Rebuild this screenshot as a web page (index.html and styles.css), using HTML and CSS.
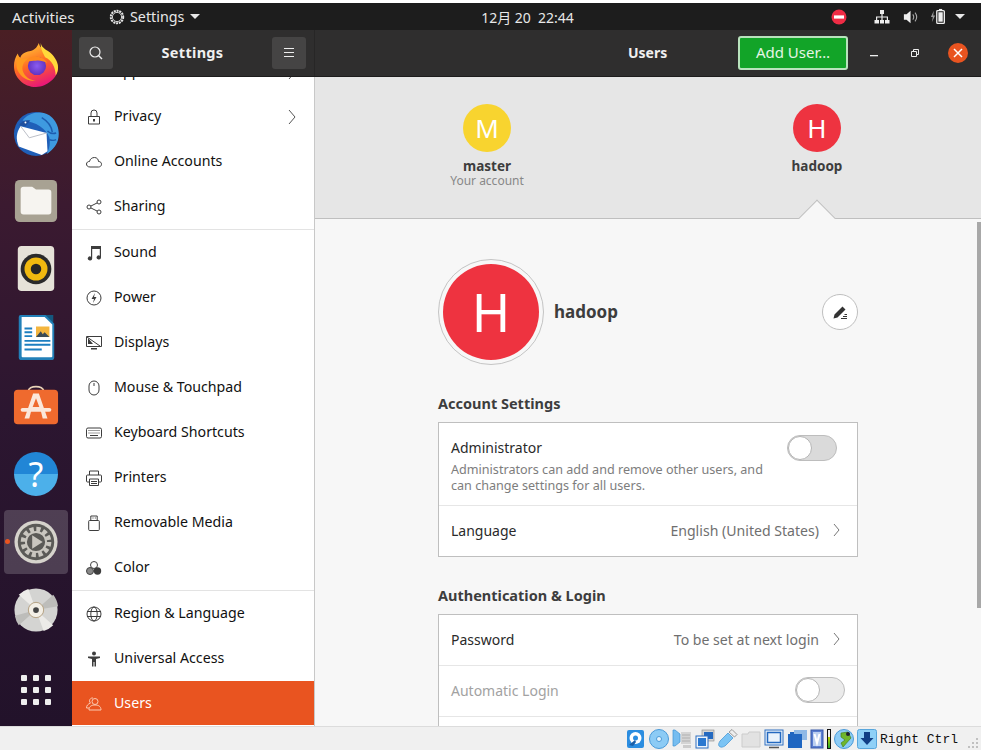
FILE: index.html
```html
<!DOCTYPE html>
<html lang="en">
<head>
<meta charset="utf-8">
<title>Settings - Users</title>
<link rel="stylesheet" href="styles.css">
</head>
<body>
<div class="screen">
  <header class="topbar">
    <div class="topbar-left">
      <span class="activities">Activities</span>
      <span class="appmenu">
        <svg class="appmenu-icon" viewBox="0 0 16 16"><circle cx="8" cy="8" r="6.2" fill="none" stroke="#e6e6e6" stroke-width="2" stroke-dasharray="2 0.8"/><circle cx="8" cy="8" r="4.6" fill="none" stroke="#e6e6e6" stroke-width="0.9"/></svg>
        Settings
        <i class="caret"></i>
      </span>
    </div>
    <div class="clock">12月 20&nbsp; 22:44</div>
    <div class="topbar-right">
      <svg class="stop" viewBox="0 0 16 16"><circle cx="8" cy="8" r="7.5" fill="#ee2c45"/><rect x="3" y="6.4" width="10" height="3.2" fill="#fff"/></svg>
      <svg class="tray net" viewBox="0 0 16 16"><path fill="#eee" d="M6 1h4v4H8.600v2.400H14V11h1.500v3.500h-4.500V11h1.800V8.600H8.600V11h1.400v3.500H6V11h1.400V8.600H3.200V11H5v3.500H.5V11H2V7.400h5.400V5H6z"/></svg>
      <svg class="tray vol" viewBox="0 0 18 16"><path fill="#eee" d="M1 5h3l4.500-4v14L4 11H1z"/><path fill="none" stroke="#aaa" stroke-width="1.200" d="M11 5c1.300 1.800 1.300 4.200 0 6M13.500 3c2.300 3 2.300 7 0 10"/></svg>
      <svg class="tray bat" viewBox="0 0 16 18"><path fill="#999" d="M3.500 3 .5 9.500h2L1.500 15l3.500-7H3z"/><rect x="6.700" y="2.700" width="8" height="13.600" rx="1" fill="none" stroke="#eee" stroke-width="1.400"/><rect x="9" y="1" width="3.400" height="2" fill="#eee"/><rect x="8.400" y="4.500" width="4.600" height="10" fill="#eee"/></svg>
      <i class="caret tray-caret"></i>
    </div>
  </header>

  <div class="desktop">
    <nav class="dock">
      <div class="dock-top">
        <div class="dock-item">
          <svg viewBox="0 0 48 48" class="dock-icon">
            <defs>
              <linearGradient id="ff" x1="0.2" y1="0" x2="0.6" y2="1"><stop offset="0" stop-color="#ffd23a"/><stop offset="0.5" stop-color="#ff6a22"/><stop offset="1" stop-color="#e8137c"/></linearGradient>
              <radialGradient id="ffc" cx="0.5" cy="0.5" r="0.6"><stop offset="0" stop-color="#8a5cf0"/><stop offset="1" stop-color="#5b2bb8"/></radialGradient>
            </defs>
            <path fill="url(#ff)" d="M24 47C11 47 1 37 1 25c0-5 1.500-9.500 4-13 .5 2.500 1.500 3.500 2.500 4.500 1-3.500 4-5.500 8-6.500 4-1 8-1 11.500-9 .5 4 3.500 6 7 8.500 6 4 13 10 13 18C47 36.500 36 47 24 47z"/>
            <path fill="#ffd93a" d="M29 1c.5 4 4 6 7.500 8.500 6 4 10.500 11 10.500 17 0 3-1 6-2.500 8.500 0-8-4-16-11-19-1.500-4-5-8-4.500-15z"/>
            <path fill="#ff9a1f" d="M5 13c1 5 6 5 12 4-6 3-9 9-6 15 2 4 6 8 13 8-9 2-18-5-20-13-1-5 0-10 1-14z"/>
            <circle cx="25" cy="25" r="9.500" fill="url(#ffc)"/>
            <path fill="#ff8a1f" d="M13 20c3-4 8-6 13-5 4 1 8 3 10 7-4-2-8-3-12-2.500-4 0-7 1-11 .5z"/>
          </svg>
        </div>
        <div class="dock-item">
          <svg viewBox="0 0 48 48" class="dock-icon">
            <circle cx="24" cy="25" r="23" fill="#1f5fb8"/>
            <path fill="#3e9ae0" d="M10 11C16 2 32-1 41 8c6 6 8 15 6 23-2 7-7 12-12 15 3-5 4-11 3-17C35 20 24 12 10 11z"/>
            <path fill="none" stroke="#1d5cae" stroke-width="1.500" d="M30 8c5 3 10 8 11 15M36 22c3 3 6 3 9 2M38 31c3 1 5 1 7 0"/>
            <path fill="#fff" d="M8 17l27 7 1 19-6 4-24-9C3 31 3 24 8 17z"/>
            <path fill="none" stroke="#b9bcc4" stroke-width="1" d="M8 17l9 12 18-5"/>
            <path fill="#1e4f9e" d="M6 16c3-4 7-6 12-5l-5 6z"/>
            <circle cx="13" cy="13" r="1" fill="#fff"/>
          </svg>
        </div>
        <div class="dock-item">
          <svg viewBox="0 0 48 48" class="dock-icon">
            <rect x="2" y="2" width="44" height="44" rx="5" fill="#a8a293"/>
            <path fill="#f6f4f0" d="M8 12a3 3 0 0 1 3-3h9l4 3h13a3 3 0 0 1 3 3v20a3 3 0 0 1-3 3H11a3 3 0 0 1-3-3z"/>
          </svg>
        </div>
        <div class="dock-item">
          <svg viewBox="0 0 48 48" class="dock-icon">
            <rect x="5" y="0" width="38" height="47" rx="4" fill="#e6e2d8"/>
            <circle cx="24" cy="24" r="16" fill="#2a2a2a"/>
            <circle cx="24" cy="24" r="12" fill="#f0b90f"/>
            <circle cx="24" cy="24" r="5.500" fill="#262626"/>
          </svg>
        </div>
        <div class="dock-item">
          <svg viewBox="0 0 48 48" class="dock-icon">
            <path fill="#14587f" d="M30 0h12v12z"/>
            <path fill="#2280b8" d="M8 0h26l9 9v35a3 3 0 0 1-3 3H9a3 3 0 0 1-3-3V2a2 2 0 0 1 2-2z"/>
            <path fill="#fff" d="M9 2h24l8 8v33a1 1 0 0 1-1 1H10a1 1 0 0 1-1-1z"/>
            <path fill="#1d7fc0" d="M12 13h8v2h-8zm0 4h8v2h-8zm0 4h8v2h-8zm0 5h27v2H12zm0 4h27v2H12zm0 5h18v2H12z"/>
            <rect x="24" y="12" width="14" height="11" fill="#f4b63f"/>
            <path fill="#3b4a55" d="M24 23l5-6 2 3 2-2 5 5z"/>
          </svg>
        </div>
        <div class="dock-item">
          <svg viewBox="0 0 48 48" class="dock-icon">
            <path fill="none" stroke="#e8d3b8" stroke-width="2" d="M16 9c0-7 16-7 16 0"/>
            <rect x="1" y="7" width="46" height="36" rx="4" fill="#ef6a2e"/>
            <path fill="#fbe7da" d="M21 11h6l9 26h-5l-2-8H19l-2 8h-5zm3 5-3.500 9h7z"/>
            <rect x="8" y="26" width="32" height="4" rx="2" fill="#fbe7da"/>
          </svg>
        </div>
        <div class="dock-item">
          <div class="help-disc">?</div>
        </div>
        <div class="dock-item active">
          <i class="run-dot"></i>
          <svg viewBox="0 0 48 48" class="dock-icon">
            <circle cx="24" cy="24" r="22.500" fill="#d6d3cc"/>
            <circle cx="24" cy="24" r="19" fill="#5b5a57"/>
            <circle cx="24" cy="24" r="13" fill="none" stroke="#c9c6bf" stroke-width="6" stroke-dasharray="4.200 2.600"/>
            <circle cx="24" cy="24" r="10.500" fill="none" stroke="#c9c6bf" stroke-width="2"/>
            <path fill="#c9c6bf" d="M20 17l11 7-11 7z"/>
          </svg>
        </div>
        <div class="dock-item">
          <svg viewBox="0 0 48 48" class="dock-icon">
            <circle cx="24" cy="24" r="22.500" fill="#d4d4d2"/>
            <path fill="#ecebe8" d="M24 24 6 8a24 24 0 0 1 10-6zM24 24l18 16a24 24 0 0 1-10 6z"/>
            <path fill="#bdbdba" d="M24 24 42 8a24 24 0 0 1 5 12zM24 24 2 30a24 24 0 0 0 4 10z"/>
            <circle cx="24" cy="24" r="8" fill="#f3efe6" stroke="#b39f80" stroke-width="1"/>
            <circle cx="24" cy="24" r="3" fill="#444"/>
          </svg>
        </div>
      </div>
      <div class="apps-grid">
        <i></i><i></i><i></i><i></i><i></i><i></i><i></i><i></i><i></i>
      </div>
    </nav>

    <div class="window">
      <div class="titlebar">
        <div class="title-left">
          <button class="hb-btn"><svg viewBox="0 0 16 16" class="hb-ico"><circle cx="7" cy="7" r="5" fill="none" stroke="#eee" stroke-width="1.200"/><path stroke="#eee" stroke-width="1.400" d="M10.500 10.500 14 14"/></svg></button>
          <span class="title-text settings-title">Settings</span>
          <button class="hb-btn"><svg viewBox="0 0 16 16" class="hb-ico"><path stroke="#eee" stroke-width="1" d="M3 3.500h10M3 7.500h10M3 11.500h10"/></svg></button>
        </div>
        <div class="title-right">
          <span class="title-text users-title">Users</span>
          <button class="add-user">Add User…</button>
          <div class="win-controls">
            <svg viewBox="0 0 12 12" class="wc"><rect x="0" y="8" width="8" height="1.300" fill="#eee"/></svg>
            <svg viewBox="0 0 12 12" class="wc"><path fill="none" stroke="#eee" stroke-width="1" d="M2.500 4.500h5.000v5h-5zM4.500 4.500V2.500h5v5h-2"/></svg>
            <span class="close"><svg viewBox="0 0 10 10"><path stroke="#fff" stroke-width="1.500" d="M1 1l8 8M9 1 1 9"/></svg></span>
          </div>
        </div>
      </div>

      <div class="panes">
        <aside class="sidebar">
          <div class="side-row clipped"><span class="side-label">Applications</span><svg viewBox="0 0 10 16" class="chev"><path fill="none" stroke="#555" d="M2 1l6 7-6 7"/></svg></div>
          <div class="side-row">
            <svg viewBox="0 0 16 16" class="side-ico"><path fill="none" stroke="#3d3d3d" d="M2.500 7.500h11v7.500h-11zM5 7.500V4a3 3 0 0 1 6 0v3.500"/><rect x="7" y="10" width="2" height="2.500" fill="#3d3d3d"/></svg>
            <span class="side-label">Privacy</span>
            <svg viewBox="0 0 10 16" class="chev"><path fill="none" stroke="#555" d="M2 1l6 7-6 7"/></svg>
          </div>
          <div class="side-row">
            <svg viewBox="0 0 16 16" class="side-ico"><path fill="none" stroke="#3d3d3d" d="M4 13C1.500 13 .5 11.500.5 10S2 7.300 3.500 7.500C4 5 6 3.500 8.500 3.500c2.500 0 4 2 4 4 2 0 3 1.200 3 2.800S14 13 12.500 13z"/></svg>
            <span class="side-label">Online Accounts</span>
          </div>
          <div class="side-row side-last">
            <svg viewBox="0 0 16 16" class="side-ico"><g fill="none" stroke="#3d3d3d"><circle cx="3" cy="8" r="2"/><circle cx="13" cy="3" r="2"/><circle cx="13" cy="13" r="2"/><path d="M4.800 7.100 11.200 3.900M4.800 8.900l6.400 3.200"/></g></svg>
            <span class="side-label">Sharing</span>
          </div>
          <div class="side-row">
            <svg viewBox="0 0 16 16" class="side-ico"><path fill="#3d3d3d" d="M5 1h10v11.500a2.200 2 0 1 1-1.200-1.800V4H6.200v9.500a2.200 2 0 1 1-1.200-1.800z"/></svg>
            <span class="side-label">Sound</span>
          </div>
          <div class="side-row">
            <svg viewBox="0 0 16 16" class="side-ico"><circle cx="8" cy="8" r="7" fill="none" stroke="#3d3d3d"/><path fill="#3d3d3d" d="M9 3 5.500 9H8l-1 4 3.500-6H8z"/></svg>
            <span class="side-label">Power</span>
          </div>
          <div class="side-row">
            <svg viewBox="0 0 16 16" class="side-ico"><path fill="none" stroke="#3d3d3d" d="M.5 1.500h15v10H.5z"/><path fill="#3d3d3d" d="M5 13h6v1.500H5zM2 3v6l5 0z"/><path stroke="#3d3d3d" d="M1 2l13 9"/></svg>
            <span class="side-label">Displays</span>
          </div>
          <div class="side-row">
            <svg viewBox="0 0 16 16" class="side-ico"><rect x="3" y="1" width="10" height="14" rx="5" fill="none" stroke="#3d3d3d"/><path stroke="#3d3d3d" d="M8 3v3"/></svg>
            <span class="side-label">Mouse &amp; Touchpad</span>
          </div>
          <div class="side-row">
            <svg viewBox="0 0 16 16" class="side-ico"><rect x=".5" y="3" width="15" height="10" rx="1.500" fill="none" stroke="#3d3d3d"/><path stroke="#3d3d3d" stroke-dasharray="1 1" d="M2.500 5.500h11M2.500 8h11"/><path stroke="#3d3d3d" d="M4 10.500h8"/></svg>
            <span class="side-label">Keyboard Shortcuts</span>
          </div>
          <div class="side-row">
            <svg viewBox="0 0 16 16" class="side-ico"><path fill="none" stroke="#3d3d3d" d="M3.500 5V1h9v4M3.500 12H1.500a1 1 0 0 1-1-1V6a1 1 0 0 1 1-1h13a1 1 0 0 1 1 1v5a1 1 0 0 1-1 1h-2M3.500 9h9v6.500h-9z"/><path stroke="#3d3d3d" d="M5 11.500h6M5 13.500h6"/></svg>
            <span class="side-label">Printers</span>
          </div>
          <div class="side-row">
            <svg viewBox="0 0 16 16" class="side-ico"><path fill="none" stroke="#3d3d3d" d="M3.500 5.500h9a.8.8 0 0 1 .8.800v8.200a1 1 0 0 1-1 1h-8.600a1 1 0 0 1-1-1V6.300a.8.800 0 0 1 .8-.8zM4.800 5.500V1h6.400v4.500"/><path stroke="#3d3d3d" d="M6.500 3h1M8.800 3h1"/></svg>
            <span class="side-label">Removable Media</span>
          </div>
          <div class="side-row side-last">
            <svg viewBox="0 0 16 16" class="side-ico"><circle cx="8" cy="5" r="3.500" fill="#fff" stroke="#444"/><circle cx="4" cy="11" r="3.500" fill="#888" stroke="#444"/><circle cx="11.500" cy="11" r="3.700" fill="#3d3d3d"/></svg>
            <span class="side-label">Color</span>
          </div>
          <div class="side-row">
            <svg viewBox="0 0 16 16" class="side-ico"><g fill="none" stroke="#3d3d3d"><circle cx="8" cy="8" r="7"/><ellipse cx="8" cy="8" rx="3.200" ry="7"/><path d="M1 5.500h14M1 10.500h14"/></g></svg>
            <span class="side-label">Region &amp; Language</span>
          </div>
          <div class="side-row">
            <svg viewBox="0 0 16 16" class="side-ico"><circle cx="8" cy="2.500" r="2" fill="#3d3d3d"/><path fill="#3d3d3d" d="M2 5.500h12v1.500l-4 1v7.500H8.500V11h-1v4.500H6V8L2 7z"/></svg>
            <span class="side-label">Universal Access</span>
          </div>
          <div class="side-row selected">
            <svg viewBox="0 0 16 16" class="side-ico"><g fill="none" stroke="#fbc9b0"><circle cx="9" cy="6.500" r="3"/><path d="M3 15c0-4 3-5 6-5s6 1 6 5z"/><path d="M7 3a3 3 0 0 0-3.500 2.800c0 1 .5 1.800 1 2.300C2 9 .5 10.500.5 13H3"/></g></svg>
            <span class="side-label">Users</span>
          </div>
        </aside>

        <main class="content">
          <section class="carousel">
            <div class="carousel-user">
              <div class="mini-avatar yellow">M</div>
              <div class="user-name">master</div>
              <div class="user-sub">Your account</div>
            </div>
            <div class="carousel-user">
              <div class="mini-avatar red">H</div>
              <div class="user-name">hadoop</div>
            </div>
            <i class="arrow"></i>
          </section>

          <section class="details">
            <div class="column">
              <div class="profile">
                <div class="big-ring"><div class="big-avatar">H</div></div>
                <div class="profile-name">hadoop</div>
                <button class="edit-btn"><svg viewBox="0 0 16 16"><path fill="#333" d="M1.500 14.500l1-4L10.500 2.500l3 3-8 8zM9 14h6v1H9zM11 12h4v.9h-4zM12.500 10H15v.9h-2.500z"/></svg></button>
              </div>

              <h2 class="section-title">Account Settings</h2>
              <div class="card">
                <div class="card-row admin">
                  <div class="admin-text">
                    <div class="row-label">Administrator</div>
                    <div class="row-desc">Administrators can add and remove other users, and can change settings for all users.</div>
                  </div>
                  <span class="switch"><i></i></span>
                </div>
                <div class="card-row plain">
                  <span class="row-label">Language</span>
                  <span class="row-value">English (United States)</span>
                  <svg viewBox="0 0 10 16" class="card-chev"><path fill="none" stroke="#777" d="M2 2l5 6-5 6"/></svg>
                </div>
              </div>

              <h2 class="section-title second">Authentication &amp; Login</h2>
              <div class="card">
                <div class="card-row plain">
                  <span class="row-label">Password</span>
                  <span class="row-value">To be set at next login</span>
                  <svg viewBox="0 0 10 16" class="card-chev"><path fill="none" stroke="#777" d="M2 2l5 6-5 6"/></svg>
                </div>
                <div class="card-row plain">
                  <span class="row-label muted">Automatic Login</span>
                  <span class="switch auto"><i></i></span>
                </div>
                <div class="card-row plain"></div>
              </div>
            </div>
            <div class="scrollbar"></div>
          </section>
        </main>
      </div>
    </div>
  </div>

  <footer class="statusbar">
    <svg class="vb" viewBox="0 0 20 20"><rect x="1" y="1" width="17" height="18" rx="2" fill="#2b8de0"/><circle cx="9.500" cy="9" r="6" fill="#fff"/><circle cx="9.500" cy="9" r="2.500" fill="#2b8de0"/><path fill="#1b5fa8" d="M3 16l6-5 1 2-3 4z"/></svg>
    <svg class="vb" viewBox="0 0 20 20"><circle cx="10" cy="10" r="9.500" fill="#8ccbf5" stroke="#4a9ad8"/><circle cx="10" cy="10" r="2.500" fill="#e6f4fd" stroke="#4a9ad8"/></svg>
    <svg class="vb" viewBox="0 0 20 20"><rect x="9" y="3" width="10" height="12" fill="#d4d4d4"/><path stroke="#b0b0b0" d="M10 6h8M10 9h8M10 12h8"/><rect x="11" y="16" width="8" height="3" fill="#ccc"/><path fill="#76bdf0" stroke="#3f92d2" stroke-width=".7" d="M1 1h2l5 4v8l-5 4H1z"/></svg>
    <svg class="vb" viewBox="0 0 20 20"><rect x="7" y="1" width="12" height="11" fill="#d5d5d5" stroke="#888" stroke-width=".6"/><rect x="9" y="3" width="9" height="7" fill="#2469c0"/><rect x="1" y="7" width="12" height="12" fill="#eef4fb" stroke="#2f6fc0"/><rect x="3" y="9" width="8" height="8" fill="#2b78d0"/></svg>
    <svg class="vb" viewBox="0 0 20 20"><path fill="#7cc4f4" stroke="#3f92d2" stroke-width=".7" d="M1 17c-1-2 0-3 1-5l8-8 5 5-8 8c-2 1-4 2-6 0z"/><path fill="#eee" stroke="#777" stroke-width=".7" d="M11 3l3-2.500 5 5L16.500 8z"/></svg>
    <svg class="vb" viewBox="0 0 20 20"><path fill="#e2e2e2" stroke="#ccc" d="M1 5h6l1-2h11v15H1z"/></svg>
    <svg class="vb" viewBox="0 0 20 20"><rect x="1" y="1" width="18" height="15" fill="#eaf3fb" stroke="#2f6fc0"/><rect x="3.500" y="3.500" width="13" height="10" fill="#e9f2fb" stroke="#2469c0" stroke-width="1.500"/><path stroke="#555" stroke-width="1.500" d="M5 18.500h10"/></svg>
    <svg class="vb" viewBox="0 0 20 20"><rect x="7" y="1" width="13" height="10" fill="#8fb9e6"/><rect x="1" y="5" width="14" height="14" fill="#1f66c1"/><rect x="3" y="3" width="4" height="3" fill="#1f66c1"/></svg>
    <svg class="vb narrow" viewBox="0 0 14 20"><rect x="1" y="1" width="12" height="18" fill="#5b7ed0" stroke="#3758a8"/><rect x="3" y="3" width="8" height="14" fill="#bcd0f0"/><path fill="none" stroke="#fff" stroke-width="2" d="M4.500 5 7 14l2.500-9"/></svg>
    <span class="led"><i></i></span>
    <svg class="vb" viewBox="0 0 20 20"><circle cx="10" cy="10" r="9.500" fill="#8ccbf5" stroke="#4a9ad8"/><path fill="#6fb62d" stroke="#3a7a12" stroke-width=".6" d="M7 4l7-1 3 6-8 9-2-4 4-3-4-3z"/><circle cx="14" cy="5" r="2" fill="#223"/></svg>
    <svg class="vb" viewBox="0 0 20 20"><rect x=".5" y=".5" width="19" height="19" rx="2" fill="#8fd0f7" stroke="#58a6dc"/><path fill="#123f86" d="M7 3h6v6h3.500L10 16 3.500 9H7z"/></svg>
    <span class="host-key">Right Ctrl</span>
    <span class="grip"><i></i><i></i><i></i><i></i><i></i><i></i></span>
  </footer>
</div>
</body>
</html>
```

FILE: styles.css
```css
* { box-sizing: border-box; }
html, body { margin: 0; padding: 0; }
body { font-family: "Noto Sans", "Open Sans", sans-serif; background: #fff; }
svg { display: block; flex: none; }
button { font: inherit; padding: 0; border: 0; }

.screen { width: 981px; height: 750px; padding-top: 3px; display: flex; flex-direction: column; overflow: hidden; background: #fff; }

/* top bar */
.topbar { height: 27px; flex: none; background: #1d1d1d; color: #e8e8e8; display: grid; grid-template-columns: 1fr auto 1fr; align-items: center; padding: 0 0 0 12px; }
.topbar-left { display: flex; align-items: center; }
.activities { width: 97px; font-size: 15px; }
.appmenu { display: flex; align-items: center; gap: 5px; font-size: 14.300px; }
.appmenu-icon { width: 16px; height: 16px; }
.caret { display: block; width: 0; height: 0; border: 5px solid transparent; border-top: 5px solid #e8e8e8; border-bottom: 0; margin-left: 1px; }
.clock { font-family: "Noto Sans", "Noto Sans CJK SC", sans-serif; font-size: 14px; margin-left: 62px; }
.topbar-right { display: flex; align-items: center; justify-content: flex-end; padding-right: 16px; }
.stop { width: 16px; height: 16px; margin-right: 27px; }
.tray { height: 16px; }
.net { width: 16px; margin-right: 13px; }
.vol { width: 16px; margin-right: 11px; }
.bat { width: 16px; height: 17px; margin-right: 9px; }
.tray-caret { margin: 0; }

/* desktop */
.desktop { flex: 1; min-height: 0; display: flex; }
.dock { width: 72px; flex: none; display: flex; flex-direction: column; justify-content: space-between; padding: 0 4px; background: linear-gradient(180deg, #4a1f24 0%, #3b1a30 25%, #2c1630 55%, #22122a 100%); }
.dock-top { display: flex; flex-direction: column; padding-top: 3px; }
.dock-item { height: 64px; margin-bottom: 4.140px; display: flex; align-items: center; justify-content: center; border-radius: 4px; position: relative; }
.dock-item.active { background: rgba(255,255,255,.18); }
.dock-icon { width: 46px; height: 46px; }
.run-dot { position: absolute; left: 1px; top: 29px; width: 5px; height: 5px; border-radius: 50%; background: #e95420; }
.help-disc { width: 44px; height: 44px; border-radius: 50%; background: linear-gradient(180deg, #2186d6 50%, #4cb0ea 50%); color: #fff; font-size: 34px; line-height: 44px; text-align: center; font-family: "Noto Sans", sans-serif; }
.apps-grid { display: grid; grid-template-columns: repeat(3, 6px); gap: 6px; justify-content: center; padding-bottom: 21px; }
.apps-grid i { width: 6px; height: 6px; background: #eee; border-radius: 1px; }

/* window */
.window { flex: 1; min-width: 0; display: flex; flex-direction: column; }
.titlebar { height: 47px; flex: none; background: #2f2e2e; border-bottom: 1px solid #1d1c1c; display: flex; color: #f0f0f0; }
.title-left { width: 243px; flex: none; display: flex; align-items: center; justify-content: space-between; padding: 0 8px 0 7px; border-right: 1px solid #272626; }
.title-text { font-size: 14px; font-weight: 700; padding-bottom: 2px; }
.settings-title { font-size: 14.500px; letter-spacing: .3px; }
.hb-btn { width: 34px; height: 32px; background: #454444; border-radius: 3px; display: flex; align-items: center; justify-content: center; }
.hb-ico { width: 16px; height: 16px; }
.title-right { flex: 1; display: flex; align-items: center; padding-right: 13px; }
.users-title { margin-left: 313px; width: 110px; }
.add-user { width: 110px; height: 34px; background: #12a428; border: 2px solid #b9e3bd; border-radius: 3px; color: #e5f5e5; font-size: 15px; padding-bottom: 2px; }
.win-controls { display: flex; align-items: center; margin-left: auto; gap: 27px; }
.wc { width: 12px; height: 12px; }
.close { width: 20px; height: 20px; border-radius: 50%; background: #e95420; display: flex; align-items: center; justify-content: center; }
.close svg { width: 10px; height: 10px; }

.panes { flex: 1; min-height: 0; display: flex; }

/* sidebar */
.sidebar { width: 243px; flex: none; background: #fff; border-right: 1px solid #c8c8c8; overflow: hidden; display: flex; flex-direction: column; justify-content: flex-end; padding-bottom: 1px; }
.side-row { height: 45px; flex: none; display: flex; align-items: center; padding: 0 17px 0 14px; color: #111; font-size: 14.200px; }
.side-last { border-bottom: 1px solid #e3e3e3; height: 46px; }
.side-ico { width: 16px; height: 16px; margin-right: 12px; }
.side-label { flex: 1; padding-bottom: 2px; }
.chev { width: 10px; height: 16px; }
.clipped { padding-left: 42px; }
.selected { background: #e95420; color: #fff; height: 44px; }

/* content */
.content { flex: 1; min-width: 0; display: flex; flex-direction: column; background: #f7f7f7; }
.carousel { height: 142px; flex: none; background: #e6e6e6; border-bottom: 1px solid #bfbfbf; position: relative; display: flex; gap: 200px; padding-top: 27px; padding-left: 107px; }
.carousel-user { width: 130px; flex: none; display: flex; flex-direction: column; align-items: center; }
.mini-avatar { width: 48px; height: 48px; border-radius: 50%; color: #fff; font-size: 26px; line-height: 48px; text-align: center; margin-bottom: 6px; }
.yellow { background: #f8d42f; }
.red { background: #ee3340; }
.user-name { font-size: 13.500px; font-weight: 700; line-height: 16px; color: #3d3d3d; }
.user-sub { font-size: 12px; line-height: 14px; color: #888; }
.arrow { position: absolute; left: 489px; bottom: -13px; width: 26px; height: 26px; background: #f7f7f7; border-left: 1px solid #bfbfbf; border-top: 1px solid #bfbfbf; transform: rotate(45deg); }

.details { flex: 1; min-height: 0; display: flex; justify-content: flex-start; position: relative; overflow: hidden; }
.column { width: 420px; margin-left: 123px; }
.scrollbar { position: absolute; top: 3px; right: 0; width: 4px; height: 386px; background: #a8a8a8; }

.profile { display: flex; align-items: center; margin-top: 40px; height: 106px; }
.big-ring { width: 106px; height: 106px; border-radius: 50%; border: 1px solid #c4c4c4; display: flex; align-items: center; justify-content: center; flex: none; }
.big-avatar { width: 96px; height: 96px; border-radius: 50%; background: #ee3340; color: #fff; font-size: 52px; line-height: 96px; text-align: center; }
.profile-name { font-size: 17px; font-weight: 700; color: #3d3d3d; margin-left: 10px; flex: 1; padding-bottom: 2px; }
.edit-btn { width: 36px; height: 36px; border-radius: 50%; background: #fff; border: 1px solid #bfbfbf; display: flex; align-items: center; justify-content: center; }
.edit-btn svg { width: 16px; height: 16px; }

.section-title { margin: 28px 0 9px; font-size: 14.500px; line-height: 20px; font-weight: 700; color: #3d3d3d; }
.card { background: #fff; border: 1px solid #bfbfbf; }
.card-row { display: flex; align-items: center; padding: 0 12px; border-top: 1px solid #e6e6e6; color: #2a2a2a; font-size: 14px; }
.card-row:first-child { border-top: 0; }
.plain { height: 51px; padding-bottom: 2px; }
.plain:first-child { height: 50px; }
.plain .row-label { padding-top: 2px; }
.admin { height: 82px; align-items: flex-start; padding-top: 14px; padding-right: 20px; justify-content: space-between; }
.admin-text { width: 320px; }
.row-label { line-height: 22px; flex: none; }
.row-desc { font-size: 12.600px; line-height: 16px; color: #7d7d7d; margin-top: 3px; }
.row-value { margin-left: auto; color: #6f6f6f; font-size: 14.100px; }
.card-chev { width: 10px; height: 16px; margin-left: 13px; margin-right: 3px; }
.muted { color: #a2a2a2; }
.switch { width: 50px; height: 26px; border-radius: 13px; background: #dadada; border: 1px solid #bdbdbd; display: block; flex: none; margin-top: -2px; }
.switch i { display: block; width: 24px; height: 24px; border-radius: 50%; background: #fff; border: 1px solid #b5b5b5; }
.switch.auto { margin-left: auto; background: #ebebeb; margin-top: 0; }

/* status bar */
.statusbar { height: 24px; flex: none; background: #f0f0f0; border-top: 1px solid #dcdcdc; display: flex; align-items: center; justify-content: flex-end; gap: 3px; padding: 0 3px 0 0; }
.vb { width: 20px; height: 20px; }
.narrow { width: 14px; }
.led { width: 4px; height: 20px; border: 1px solid #111; background: #eee; display: flex; align-items: flex-end; }
.led i { display: block; width: 100%; height: 60%; background: linear-gradient(180deg, #c6d800, #1fa52a); }
.host-key { font-family: "Liberation Mono", monospace; font-size: 13px; color: #111; padding-top: 1px; }
.grip { display: grid; grid-template-columns: repeat(3, 2px); grid-template-rows: repeat(3, 2px); gap: 2px; width: 10px; height: 10px; align-self: flex-end; margin: 0 0 2px 7px; }
.grip i { background: #c0c0c0; }
.grip i:nth-child(1) { grid-column: 3; grid-row: 1; }
.grip i:nth-child(2) { grid-column: 2; grid-row: 2; }
.grip i:nth-child(3) { grid-column: 3; grid-row: 2; }
.grip i:nth-child(4) { grid-column: 1; grid-row: 3; }
.grip i:nth-child(5) { grid-column: 2; grid-row: 3; }
.grip i:nth-child(6) { grid-column: 3; grid-row: 3; }
```
